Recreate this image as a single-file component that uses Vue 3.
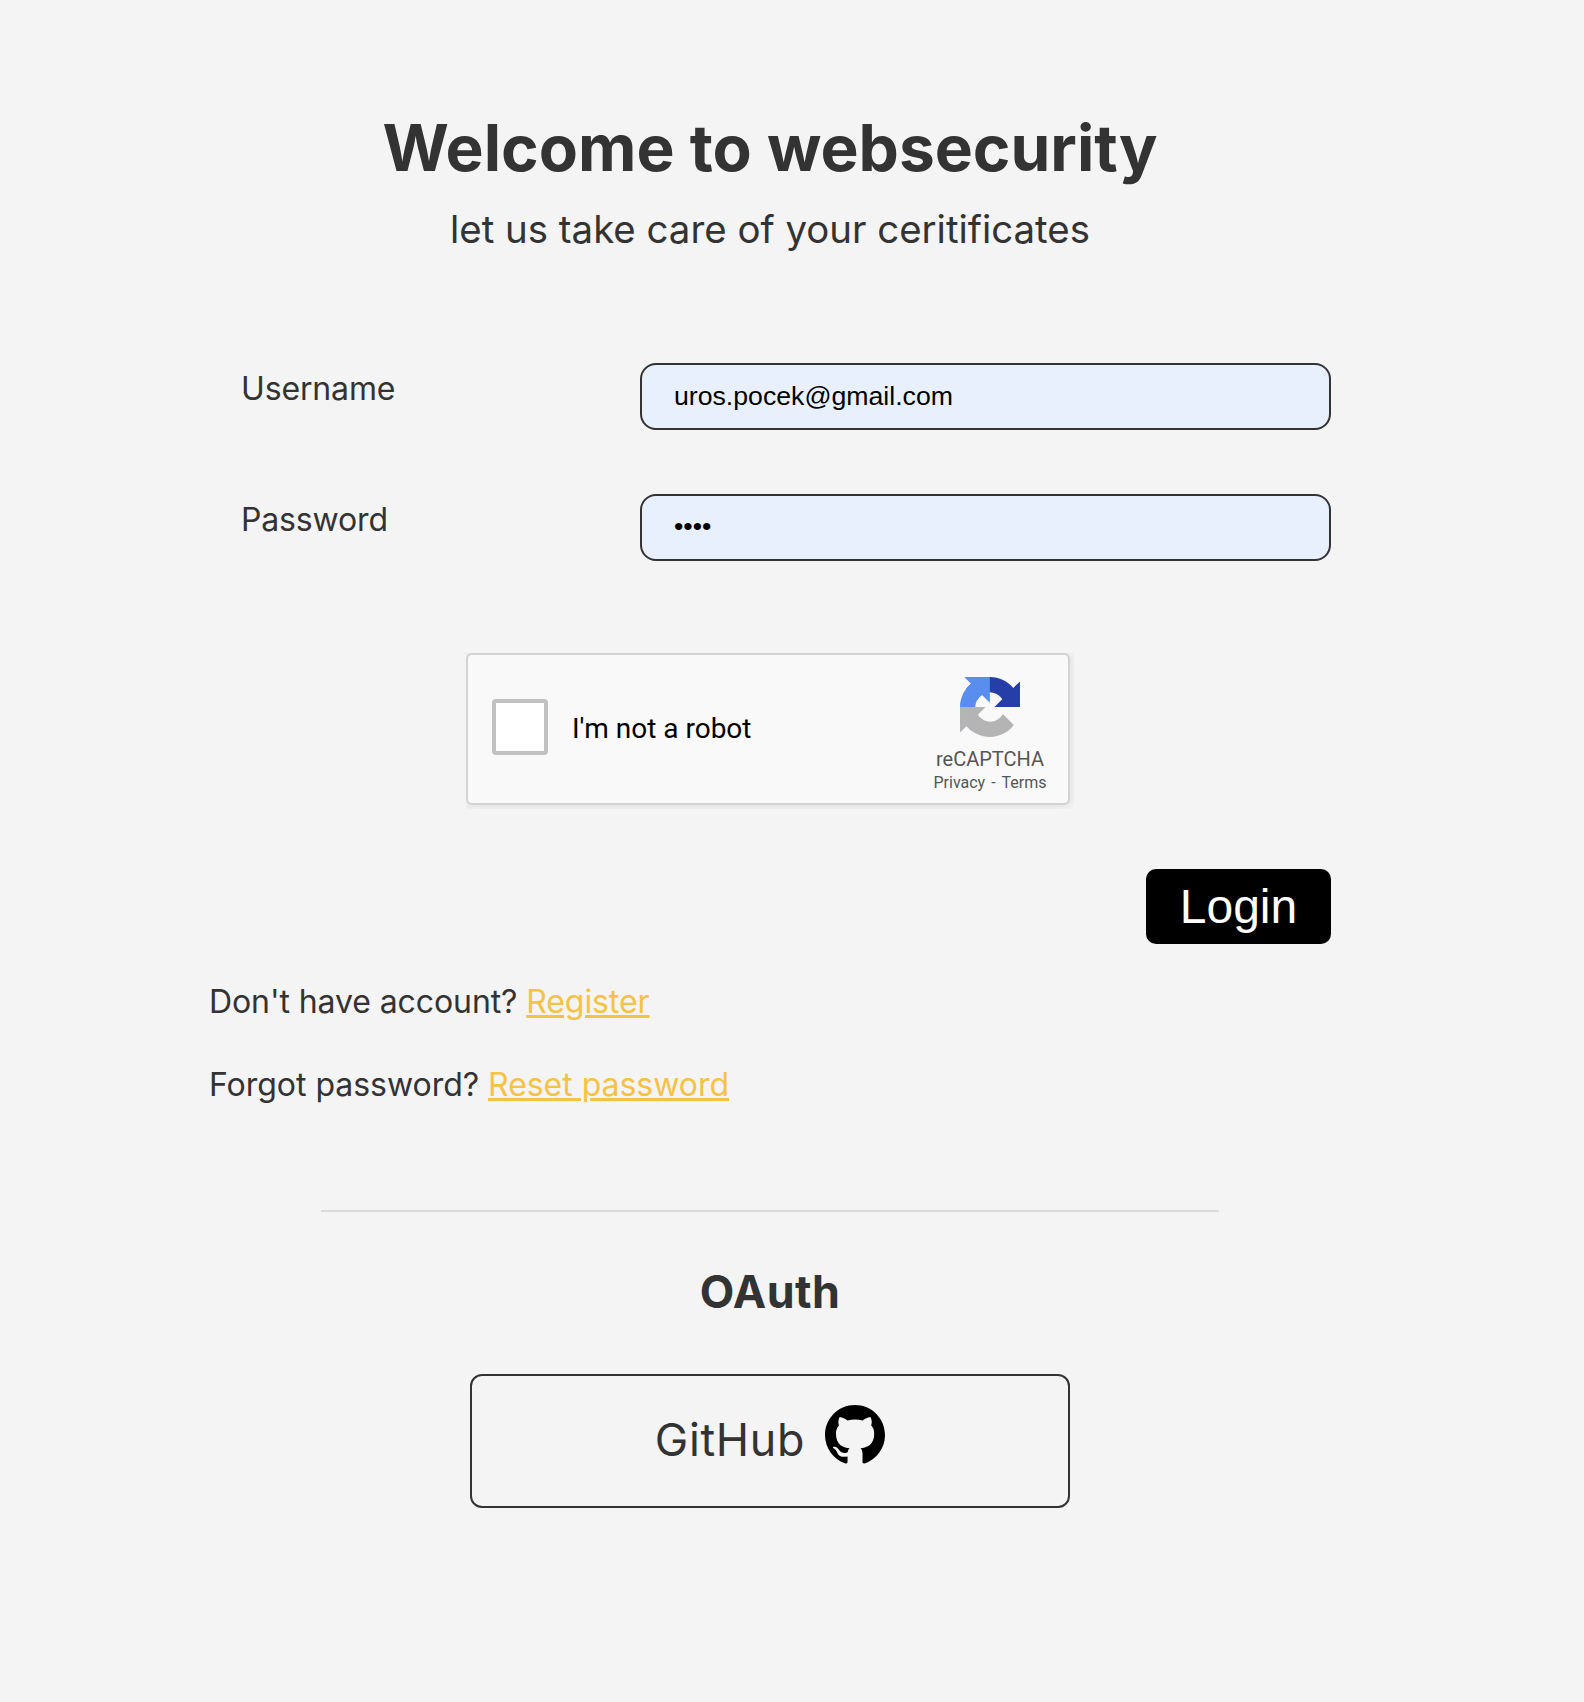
<script setup>
import { ref } from 'vue'

const username = ref('uros.pocek@gmail.com')
const password = ref('1234')
</script>

<template>
  <main class="page">
    <h1 class="title">Welcome to websecurity</h1>
    <p class="subtitle">let us take care of your ceritificates</p>

    <form class="login" @submit.prevent>
      <div class="field">
        <label for="username">Username</label>
        <input id="username" v-model="username" type="text" />
      </div>
      <div class="field">
        <label for="password">Password</label>
        <input id="password" v-model="password" type="password" />
      </div>

      <div class="captcha-frame">
        <div class="captcha">
          <span class="checkbox"></span>
          <span class="captcha-label">I'm not a robot</span>
          <div class="brand">
            <svg class="brand-logo" viewBox="0 0 64 64">
              <path fill="#263fa8" d="M64 31.955l-.033-1.37V4.687l-7.16 7.16C50.948 4.674 42.033.093 32.05.093c-10.4 0-19.622 4.96-25.458 12.64l11.736 11.86a15.55 15.55 0 0 1 4.754-5.334c2.05-1.6 4.952-2.906 8.968-2.906.485 0 .86.057 1.135.163 4.976.393 9.288 3.14 11.828 7.124l-8.307 8.307L64 31.953" />
              <path fill="#5a8eee" d="M31.862.094l-1.37.033H4.594l7.16 7.16C4.58 13.147 0 22.06 0 32.046c0 10.4 4.96 19.622 12.64 25.458L24.5 45.768a15.55 15.55 0 0 1-5.334-4.754c-1.6-2.05-2.906-4.952-2.906-8.968 0-.485.057-.86.163-1.135.393-4.976 3.14-9.288 7.124-11.828l8.307 8.307L31.86.095" />
              <path fill="#b4b4b4" d="M.001 32.045l.033 1.37v25.898l7.16-7.16c5.86 7.173 14.774 11.754 24.76 11.754 10.4 0 19.622-4.96 25.458-12.64l-11.736-11.86a15.55 15.55 0 0 1-4.754 5.334c-2.05 1.6-4.952 2.906-8.968 2.906-.485 0-.86-.057-1.135-.163-4.976-.393-9.288-3.14-11.828-7.124l8.307-8.307c-10.522.04-22.4.066-27.295-.005" />
            </svg>
            <span class="brand-name">reCAPTCHA</span>
            <span class="brand-links">Privacy&nbsp;-&nbsp;Terms</span>
          </div>
        </div>
      </div>

      <button class="submit" type="submit">Login</button>
    </form>

    <div class="links">
      <p class="signup">Don't have account? <a href="#">Register</a></p>
      <p>Forgot password? <a href="#">Reset password</a></p>
    </div>

    <hr class="divider" />

    <h2 class="oauth">OAuth</h2>
    <a class="github">
      <span>GitHub</span>
      <svg viewBox="0 0 16 16">
        <path d="M8 0C3.58 0 0 3.58 0 8c0 3.54 2.29 6.53 5.47 7.59.4.07.55-.17.55-.38 0-.19-.01-.82-.01-1.49-2.01.37-2.53-.49-2.69-.94-.09-.23-.48-.94-.82-1.13-.28-.15-.68-.52-.01-.53.63-.01 1.08.58 1.23.82.72 1.21 1.87.87 2.33.66.07-.52.28-.87.51-1.07-1.78-.2-3.64-.89-3.64-3.95 0-.87.31-1.59.82-2.15-.08-.2-.36-1.02.08-2.12 0 0 .67-.21 2.2.82.64-.18 1.32-.27 2-.27s1.36.09 2 .27c1.53-1.04 2.2-.82 2.2-.82.44 1.1.16 1.92.08 2.12.51.56.82 1.27.82 2.15 0 3.07-1.87 3.75-3.65 3.95.29.25.54.73.54 1.48 0 1.07-.01 1.93-.01 2.2 0 .21.15.46.55.38A8.01 8.01 0 0 0 16 8c0-4.42-3.58-8-8-8z" />
      </svg>
    </a>
  </main>
</template>

<style>
body {
  background: #f4f4f4;
}
</style>

<style scoped>
.page {
  box-sizing: border-box;
  width: 1540px;
  min-height: 1702px;
  padding-top: 109px;
  display: flex;
  flex-direction: column;
  align-items: center;
  background: #f4f4f4;
  color: #333;
  font: 32px/38px Inter, sans-serif;
}
.title {
  margin: 0;
  font-size: 64px;
  line-height: 78px;
  font-weight: 700;
}
.subtitle {
  margin: 19px 0 0;
  font-size: 38.4px;
  line-height: 46px;
}
.login {
  width: 1122px;
  margin-top: 111px;
  display: flex;
  flex-direction: column;
}
.field {
  display: flex;
  align-items: flex-start;
  justify-content: space-between;
  margin-bottom: 64px;
  padding-left: 32px;
}
.field label {
  padding-top: 7px;
  letter-spacing: -0.15px;
}
.field input {
  box-sizing: border-box;
  width: 691px;
  height: 67px;
  margin: 0;
  padding: 0 32px;
  border: 2px solid #333;
  border-radius: 16px;
  outline: none;
  background: #e8f0fe;
  color: #000;
  font: 26.667px "Liberation Sans", Arial, sans-serif;
}
.field input[type="password"] {
  padding-bottom: 2px;
}
.captcha-frame {
  width: 608px;
  height: 156px;
  margin: 28px 0 60px 257px;
  overflow: hidden;
}
.captcha {
  box-sizing: border-box;
  width: 604px;
  height: 152px;
  padding-left: 24px;
  display: flex;
  align-items: center;
  border: 2px solid #d3d3d3;
  border-radius: 6px;
  background: #f9f9f9;
  box-shadow: 0 0 8px 2px rgba(0, 0, 0, 0.08);
  color: #000;
  font-family: Roboto, sans-serif;
}
.checkbox {
  box-sizing: border-box;
  width: 56px;
  height: 56px;
  margin-top: -4px;
  border: 4px solid #c1c1c1;
  border-radius: 4px;
  background: #fff;
}
.captcha-label {
  margin-left: 24px;
  font-size: 28px;
}
.brand {
  width: 140px;
  margin-left: auto;
  margin-right: 8px;
  padding-top: 12px;
  display: flex;
  flex-direction: column;
  align-items: center;
  color: #555;
}
.brand-logo {
  width: 60px;
  height: 60px;
}
.brand-name {
  margin-top: 10px;
  font-size: 20px;
  line-height: 24px;
}
.brand-links {
  font-size: 16px;
  line-height: 23px;
  word-spacing: 2px;
}
.submit {
  align-self: flex-end;
  width: 185px;
  height: 75px;
  padding: 0;
  border: 0;
  border-radius: 10px;
  background: #000;
  color: #fff;
  font: 48px "Liberation Sans", Arial, sans-serif;
}
.links {
  width: 1122px;
  margin-top: 39px;
  display: flex;
  flex-direction: column;
  gap: 45px;
}
.links p {
  margin: 0;
  letter-spacing: -0.03px;
}
.links .signup {
  letter-spacing: -0.09px;
}
.links a {
  color: #f6c244;
}
.divider {
  width: 898px;
  height: 2px;
  margin: 106px 0 0;
  border: 0;
  background: #dbdbdb;
}
.oauth {
  margin: 53px 0 0;
  font-size: 44.8px;
  line-height: 54px;
  font-weight: 700;
  letter-spacing: 0.4px;
}
.github {
  box-sizing: border-box;
  width: 600px;
  height: 134px;
  margin-top: 55px;
  display: flex;
  align-items: center;
  justify-content: center;
  gap: 20px;
  border: 2px solid #333;
  border-radius: 12px;
  font-size: 44.8px;
}
.github span {
  margin-top: -2px;
  letter-spacing: 0.7px;
}
.github svg {
  width: 60px;
  height: 60px;
  margin-top: -12px;
  fill: #000;
}
</style>
